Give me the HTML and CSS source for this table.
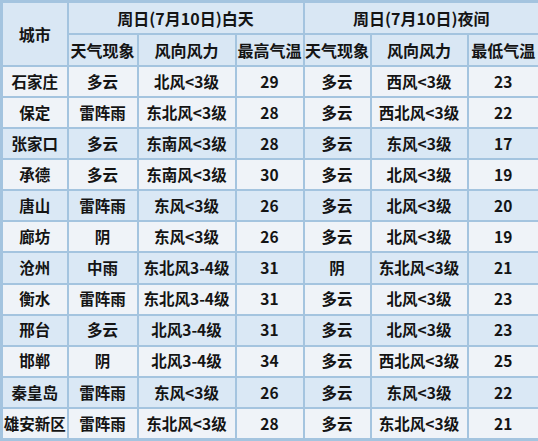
FILE: index.html
```html
<!DOCTYPE html>
<html lang="zh">
<head>
<meta charset="utf-8">
<link rel="stylesheet" href="styles.css">
</head>
<body>
<table class="wx">
  <colgroup>
    <col class="c1"><col class="c2"><col class="c3"><col class="c4"><col class="c5"><col class="c6"><col class="c7">
  </colgroup>
  <thead>
    <tr class="h1">
      <th rowspan="2">城市</th>
      <th colspan="3">周日(7月10日)白天</th>
      <th colspan="3">周日(7月10日)夜间</th>
    </tr>
    <tr class="h2">
      <th>天气现象</th><th>风向风力</th><th>最高气温</th>
      <th>天气现象</th><th>风向风力</th><th>最低气温</th>
    </tr>
  </thead>
  <tbody>
    <tr class="lt"><td>石家庄</td><td>多云</td><td>北风&lt;3级</td><td>29</td><td>多云</td><td>西风&lt;3级</td><td>23</td></tr>
    <tr class="lt"><td>保定</td><td>雷阵雨</td><td>东北风&lt;3级</td><td>28</td><td>多云</td><td>西北风&lt;3级</td><td>22</td></tr>
    <tr class="bl"><td>张家口</td><td>多云</td><td>东南风&lt;3级</td><td>28</td><td>多云</td><td>东风&lt;3级</td><td>17</td></tr>
    <tr class="lt"><td>承德</td><td>多云</td><td>东南风&lt;3级</td><td>30</td><td>多云</td><td>北风&lt;3级</td><td>19</td></tr>
    <tr class="bl"><td>唐山</td><td>雷阵雨</td><td>东风&lt;3级</td><td>26</td><td>多云</td><td>北风&lt;3级</td><td>20</td></tr>
    <tr class="lt"><td>廊坊</td><td>阴</td><td>东风&lt;3级</td><td>26</td><td>多云</td><td>北风&lt;3级</td><td>19</td></tr>
    <tr class="bl"><td>沧州</td><td>中雨</td><td>东北风3-4级</td><td>31</td><td>阴</td><td>东北风&lt;3级</td><td>21</td></tr>
    <tr class="lt"><td>衡水</td><td>雷阵雨</td><td>东北风3-4级</td><td>31</td><td>多云</td><td>北风&lt;3级</td><td>23</td></tr>
    <tr class="bl"><td>邢台</td><td>多云</td><td>北风3-4级</td><td>31</td><td>多云</td><td>北风&lt;3级</td><td>23</td></tr>
    <tr class="lt"><td>邯郸</td><td>阴</td><td>北风3-4级</td><td>34</td><td>多云</td><td>西北风&lt;3级</td><td>25</td></tr>
    <tr class="bl"><td>秦皇岛</td><td>雷阵雨</td><td>东风&lt;3级</td><td>26</td><td>多云</td><td>东风&lt;3级</td><td>22</td></tr>
    <tr class="lt"><td>雄安新区</td><td>雷阵雨</td><td>东北风&lt;3级</td><td>28</td><td>多云</td><td>东北风&lt;3级</td><td>21</td></tr>
  </tbody>
</table>
</body>
</html>
```
FILE: styles.css
```css
html, body {
  margin: 0;
  padding: 0;
  background: #f2f5f9;
}
.wx {
  width: 538px;
  height: 441px;
  table-layout: fixed;
  border-collapse: collapse;
  font-family: "Noto Sans CJK SC", "Noto Sans", sans-serif;
  font-weight: 700;
  font-size: 15.5px;
  color: #141414;
  border: 3px solid #a4c4df;
}
.c1 { width: 66px; }
.c2 { width: 70px; }
.c3 { width: 98px; }
.c4 { width: 68px; }
.c5 { width: 67px; }
.c6 { width: 97px; }
.c7 { width: 72px; }
.wx th, .wx td {
  border: 2px solid #a4c4df;
  text-align: center;
  vertical-align: middle;
  padding: 0;
  white-space: nowrap;
  line-height: 1;
}
.wx th {
  background: #d9e7f4;
  font-weight: 700;
  font-size: 16px;
}
.h1 th { height: 30px; }
.h2 th { height: 30px; }
.wx td { height: 29px; }
.lt td { background: #eff3f8; }
.bl td { background: #dae8f5; }
```
